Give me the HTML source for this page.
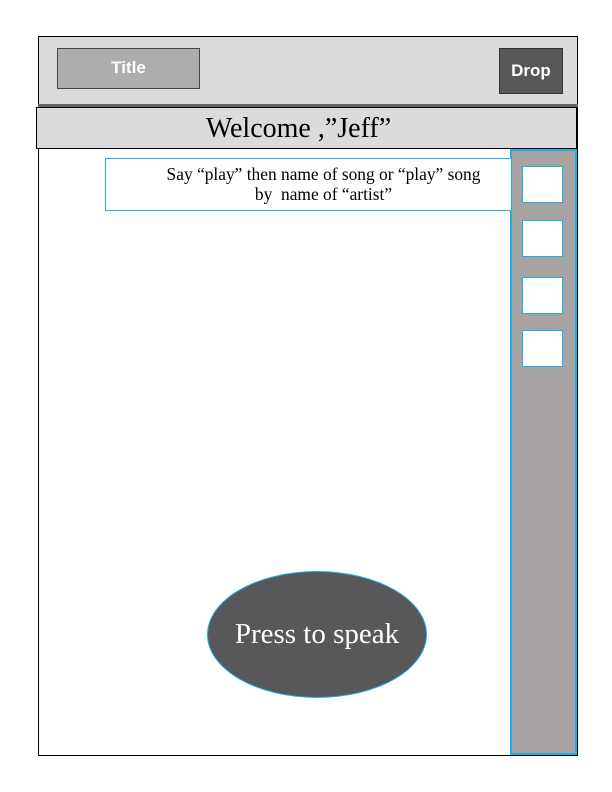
<!DOCTYPE html><html><head><style>
body{margin:0;width:612px;height:792px;background:#fff;position:relative;font-family:"Liberation Serif",serif}
div{position:absolute;box-sizing:border-box}
</style></head><body>
<div style="left:38px;top:36px;width:540px;height:720px;border:1px solid #000"></div>
<div style="left:39px;top:37px;width:538px;height:68px;background:#dcdbda"></div>
<div style="left:38px;top:104px;width:540px;height:3px;background:#666"></div>
<div style="left:57px;top:48px;width:143px;height:41px;background:#adadaf;border:1px solid #444;color:#fff;font:bold 17px 'Liberation Sans',sans-serif;text-align:center;line-height:37px">Title</div>
<div style="left:499px;top:48px;width:64px;height:46px;background:#58585a;border:1px solid #333;color:#fff;font:bold 17px 'Liberation Sans',sans-serif;text-align:center;line-height:44px">Drop</div>
<div style="left:36px;top:107px;width:541px;height:42px;background:#dcdbda;border:1px solid #000;text-align:center;font-size:28px;line-height:42px;padding-right:16px">Welcome ,”Jeff”</div>
<div style="left:510px;top:149px;width:67px;height:606px;background:#a8a4a3;border:2px solid #1ab0e8"></div>
<div style="left:522px;top:166px;width:41px;height:37px;background:#fff;border:1px solid #1ab0e8"></div>
<div style="left:522px;top:220px;width:41px;height:37px;background:#fff;border:1px solid #1ab0e8"></div>
<div style="left:522px;top:277px;width:41px;height:37px;background:#fff;border:1px solid #1ab0e8"></div>
<div style="left:522px;top:330px;width:41px;height:37px;background:#fff;border:1px solid #1ab0e8"></div>
<div style="left:105px;top:158px;width:406px;height:53px;border:1px solid #1ab0e8;border-right:none;background:#fff;text-align:center;font-size:17.4px;line-height:20px;padding:5px 0 0 30px;white-space:nowrap">Say “play” then name of song or “play” song<br>by&nbsp; name of “artist”</div>
<div style="left:207px;top:571px;width:220px;height:127px;border-radius:50%;background:#58585a;border:1px solid #1ab0e8;color:#fff;font-size:29px;text-align:center;line-height:125px">Press to speak</div>
</body></html>
